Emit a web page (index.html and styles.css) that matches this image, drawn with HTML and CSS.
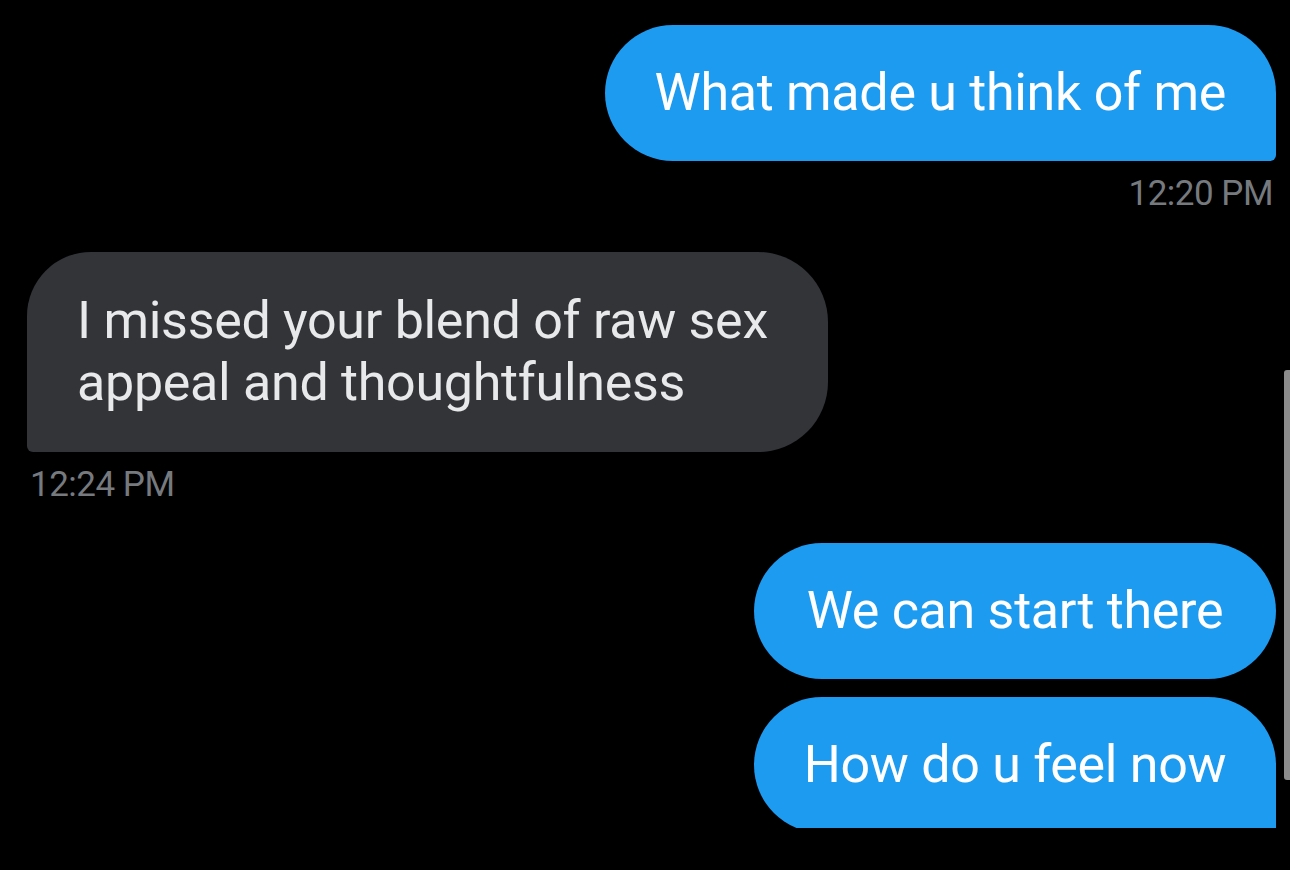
FILE: index.html
```html
<!DOCTYPE html>
<html>
<head>
<meta charset="utf-8">
<link rel="stylesheet" href="styles.css">
</head>
<body>
<div class="screen">
  <div class="thread">
    <div class="msg sent">
      <div class="bubble blue tail">What made u think of me</div>
      <div class="time">12:20 PM</div>
    </div>
    <div class="msg recv">
      <div class="bubble gray">I missed your blend of raw sex<br>appeal and thoughtfulness</div>
      <div class="time">12:24 PM</div>
    </div>
    <div class="msg sent group">
      <div class="bubble blue wide">We can start there</div>
      <div class="bubble blue wide tail">How do u feel now</div>
    </div>
  </div>
  <div class="scrollbar"></div>
</div>
</body>
</html>
```
FILE: styles.css
```css
html, body {
  margin: 0;
  padding: 0;
  background: #000;
}
.screen {
  position: relative;
  width: 1290px;
  height: 870px;
  background: #000;
  font-family: "Roboto", "Liberation Sans", sans-serif;
}
.thread {
  height: 828px;
  overflow: hidden;
  padding: 25px 14px 0 27px;
  box-sizing: border-box;
  display: flex;
  flex-direction: column;
  gap: 38px;
}
.msg {
  display: flex;
  flex-direction: column;
}
.msg.sent {
  align-items: flex-end;
}
.msg.recv {
  align-items: flex-start;
}
.msg.group {
  gap: 18px;
}
.bubble {
  box-sizing: border-box;
  font-size: 52px;
  line-height: 62px;
  padding: 37px 50px;
  border-radius: 68px;
  letter-spacing: -0.3px;
  white-space: nowrap;
}
.blue {
  background: #1d9bf0;
  color: #ffffff;
}
.tail {
  border-bottom-right-radius: 6px;
}
.wide {
  width: 522px;
  padding-left: 0;
  padding-right: 0;
  text-align: center;
}
.gray {
  background: #333438;
  color: #e7e9ea;
  width: 801px;
  padding: 38px 50px;
  border-radius: 64px 70px 70px 6px;
}
.time {
  margin-top: 13px;
  font-size: 35px;
  line-height: 40px;
  color: #767a7f;
  letter-spacing: -0.5px;
}
.msg.sent .time {
  margin-right: 3px;
}
.msg.recv .time {
  margin-left: 3px;
}
.scrollbar {
  position: absolute;
  left: 1284px;
  top: 370px;
  width: 6px;
  height: 410px;
  background: #8b8b8b;
  border-radius: 3px 0 0 3px;
}
```
